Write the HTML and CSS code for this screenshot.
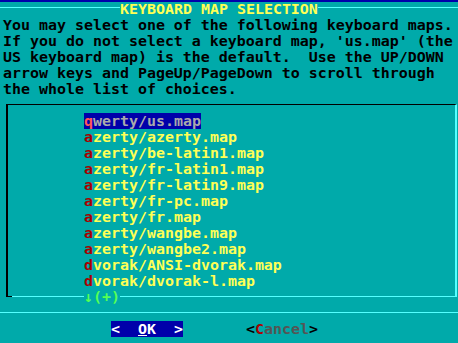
FILE: index.html
```html
<!DOCTYPE html>
<html lang="en">
<head>
    <meta charset="UTF-8">
    <meta name="viewport" content="width=device-width, initial-scale=1.0">
    <title>Keyboard Map Selection</title>
    <link rel="stylesheet" href="styles.css">
</head>
<body>
    <div class="screen">
        <div class="topbar"></div>
        <div class="title-row">
            <span class="rule rule-left"></span>
            <span class="title">KEYBOARD MAP SELECTION</span>
            <span class="rule rule-fill"></span>
        </div>
        <div class="prompt">
            <div class="line">You may select one of the following keyboard maps.</div>
            <div class="line">If you do not select a keyboard map, 'us.map' (the</div>
            <div class="line">US keyboard map) is the default.  Use the UP/DOWN</div>
            <div class="line">arrow keys and PageUp/PageDown to scroll through</div>
            <div class="line">the whole list of choices.</div>
        </div>
        <div class="listbox">
            <ul class="menu">
                <li><span class="current"><span class="key">q</span>werty/us.map</span></li>
                <li><span class="key">a</span>zerty/azerty.map</li>
                <li><span class="key">a</span>zerty/be-latin1.map</li>
                <li><span class="key">a</span>zerty/fr-latin1.map</li>
                <li><span class="key">a</span>zerty/fr-latin9.map</li>
                <li><span class="key">a</span>zerty/fr-pc.map</li>
                <li><span class="key">a</span>zerty/fr.map</li>
                <li><span class="key">a</span>zerty/wangbe.map</li>
                <li><span class="key">a</span>zerty/wangbe2.map</li>
                <li><span class="key">d</span>vorak/ANSI-dvorak.map</li>
                <li><span class="key">d</span>vorak/dvorak-l.map</li>
            </ul>
        </div>
        <div class="listbox-foot">
            <span class="corner-left"></span>
            <span class="rule rule-short"></span>
            <span class="more">↓(+)</span>
            <span class="rule rule-fill"></span>
            <span class="corner-right"></span>
        </div>
        <div class="separator"></div>
        <div class="buttons">
            <span class="button selected">&lt;  <u>O</u>K  &gt;</span>
            <span class="button">&lt;<span class="hotkey">C</span><span class="dim">ancel</span>&gt;</span>
        </div>
    </div>
</body>
</html>
```

FILE: styles.css
```css
html, body {
    margin: 0;
    padding: 0;
    background-color: #00AAAA;
    overflow: hidden;
}
.screen {
    width: 458px;
    height: 343px;
    font-family: "DejaVu Sans Mono", monospace;
    font-weight: bold;
    font-size: 14.95px;
    line-height: 16px;
    color: #000000;
}
.topbar {
    height: 2px;
    background-color: #0000AA;
}
.title-row {
    display: flex;
    height: 15px;
    line-height: 14px;
}
.rule {
    height: 1px;
    margin-top: 5px;
    background-color: #55FFFF;
}
.rule-left {
    width: 120px;
}
.rule-fill {
    flex: 1;
}
.title {
    color: #FFFF55;
}
.prompt {
    padding-left: 3px;
}
.line {
    height: 16px;
    white-space: pre;
}
.listbox {
    box-sizing: border-box;
    width: 451px;
    margin-left: 6px;
    margin-top: 7px;
    padding-top: 8px;
    border-top: 1px solid #000000;
    border-left: 2px solid #000000;
    border-right: 2px solid #55FFFF;
}
.menu {
    list-style: none;
    margin: 0;
    padding: 0 0 0 76px;
    color: #FFFF55;
}
.menu li {
    height: 16px;
    white-space: nowrap;
}
.key {
    color: #AA0000;
}
.current {
    display: inline-block;
    vertical-align: top;
    background-color: #0000AA;
    color: #AAAAAA;
}
.current .key {
    color: #FF5555;
}
.listbox-foot {
    display: flex;
    align-items: flex-start;
    width: 451px;
    height: 16px;
    margin-left: 6px;
}
.listbox-foot .rule {
    margin-top: 7px;
}
.corner-left {
    box-sizing: border-box;
    width: 6px;
    height: 8px;
    border-left: 2px solid #000000;
    border-bottom: 1px solid #000000;
}
.rule-short {
    width: 72px;
}
.more {
    color: #55FF55;
}
.corner-right {
    box-sizing: border-box;
    width: 4px;
    height: 8px;
    border-right: 2px solid #55FFFF;
    border-bottom: 1px solid #55FFFF;
}
.separator {
    height: 1px;
    margin: 7px 0 8px;
    background-color: #55FFFF;
}
.buttons {
    display: flex;
    gap: 63px;
    padding-left: 111px;
    height: 16px;
}
.button {
    white-space: pre;
}
.button.selected {
    background-color: #0000AA;
    color: #FFFFFF;
}
.button u {
    text-decoration-thickness: 1px;
}
.hotkey {
    color: #AA0000;
}
.dim {
    color: #555555;
}
```
